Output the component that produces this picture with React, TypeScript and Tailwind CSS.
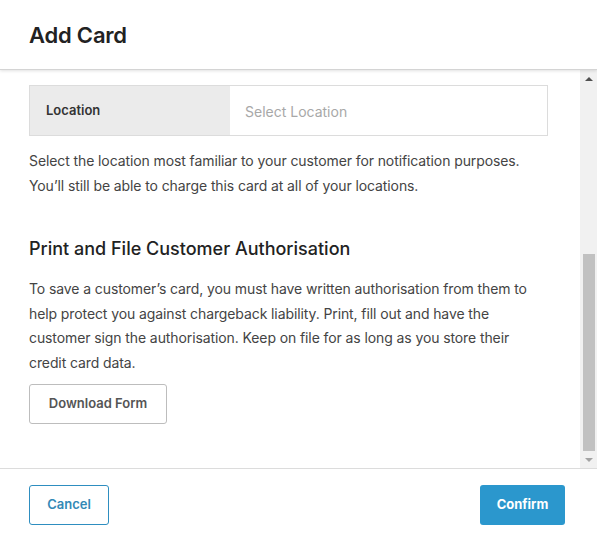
import React from "react";

export default function App() {
  return (
    <div
      className="w-[597px] h-[536px] bg-white flex flex-col overflow-hidden text-[#3c3c3c]"
      style={{ fontFamily: 'Inter, "Liberation Sans", Arial, sans-serif' }}
    >
      {/* Header */}
      <div className="h-[70px] shrink-0 flex items-center pl-[29px] border-b border-[#d4d4d4] shadow-[0_1px_3px_rgba(0,0,0,0.12)] relative z-10">
        <h1 className="text-[22px] font-semibold text-[#222] tracking-[-0.2px] mt-[2px]">Add Card</h1>
      </div>

      {/* Body */}
      <div className="flex h-[398px] shrink-0">
        <div className="flex-1 pl-[29px] pr-[32px] pt-[15px]">
          <div className="flex h-[51px] border border-[#dcdcdc]">
            <div className="w-[200px] bg-[#ebebeb] flex items-center pl-[16px] pt-[1px] text-[13px] font-semibold text-[#333]">
              Location
            </div>
            <div className="flex-1 flex items-center pl-[15px] pt-[2px] text-[14px] text-[#a8a8a8]">
              Select Location
            </div>
          </div>
          <p className="mt-[12px] text-[14px] leading-[25px] text-[#444] tracking-[-0.1px]">
            Select the location most familiar to your customer for notification purposes.
            <br />
            You’ll still be able to charge this card at all of your locations.
          </p>
          <h2 className="mt-[39px] text-[18px] font-medium text-[#222] leading-[24px]">
            Print and File Customer Authorisation
          </h2>
          <p className="mt-[16px] text-[14px] leading-[24.7px] text-[#444] tracking-[-0.1px]">
            To save a customer’s card, you must have written authorisation from them to
            <br />
            help protect you against chargeback liability. Print, fill out and have the
            <br />
            customer sign the authorisation. Keep on file for as long as you store their
            <br />
            credit card data.
          </p>
          <button className="mt-[8px] h-[40px] w-[138px] border border-[#bdbdbd] rounded-[3px] text-[13px] font-semibold text-[#555]">
            Download Form
          </button>
        </div>

        {/* Scrollbar */}
        <div className="w-[17px] shrink-0 bg-[#f1f1f1] flex flex-col items-center">
          <div className="h-[17px] w-full flex items-center justify-center">
            <div className="w-0 h-0 border-l-[4px] border-r-[4px] border-b-[4px] border-l-transparent border-r-transparent border-b-[#505050]" />
          </div>
          <div className="mt-[167px] w-[12px] h-[197px] bg-[#c1c1c1]" />
          <div className="flex-1" />
          <div className="h-[17px] w-full flex items-center justify-center">
            <div className="w-0 h-0 border-l-[4px] border-r-[4px] border-t-[4px] border-l-transparent border-r-transparent border-t-[#a3a3a3]" />
          </div>
        </div>
      </div>

      {/* Footer */}
      <div className="flex-1 border-t border-[#dcdcdc] flex items-start justify-between pl-[29px] pr-[32px] pt-[16px]">
        <button className="h-[40px] w-[80px] border border-[#2e8ec0] rounded-[3px] text-[13px] font-semibold text-[#3389b6]">
          Cancel
        </button>
        <button className="h-[40px] w-[85px] bg-[#2b97cd] rounded-[3px] text-[13px] font-bold text-white">
          Confirm
        </button>
      </div>
    </div>
  );
}
